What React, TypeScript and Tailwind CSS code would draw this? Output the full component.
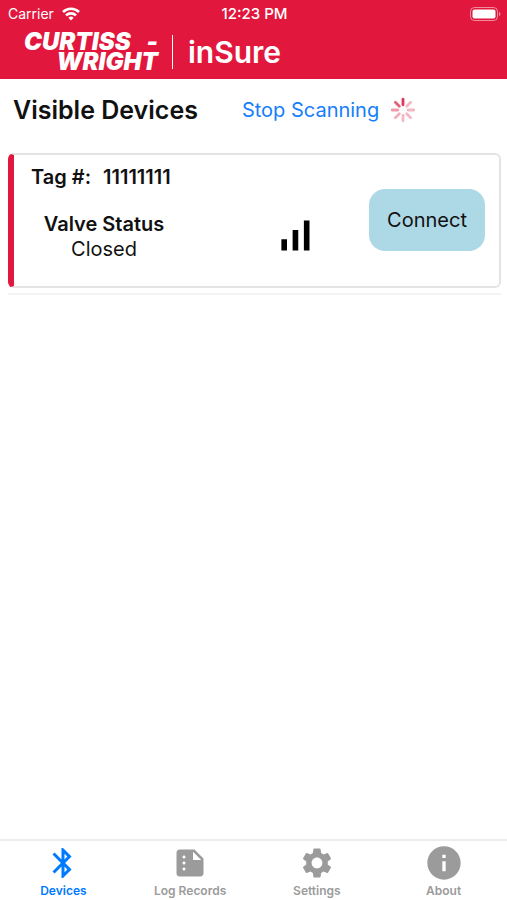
import React, { useState } from 'react';
import type { IconType } from 'react-icons';
import { MdBluetooth, MdInfo, MdSettings, MdSignalCellularAlt, MdSummarize } from 'react-icons/md';

interface Device {
  tag: string;
  valveStatus: string;
}

interface Tab {
  label: string;
  icon: IconType;
  iconClass: string;
}

const devices: Device[] = [{ tag: '11111111', valveStatus: 'Closed' }];

const tabs: Tab[] = [
  { label: 'Devices', icon: MdBluetooth, iconClass: 'size-9' },
  { label: 'Log Records', icon: MdSummarize, iconClass: 'size-9' },
  { label: 'Settings', icon: MdSettings, iconClass: 'size-9' },
  { label: 'About', icon: MdInfo, iconClass: 'size-10' },
];

const WifiIcon: React.FC = () => (
  <svg viewBox="0 0 18 14" className="h-3.5 w-[18px]" fill="none" stroke="currentColor" strokeWidth="2.6" aria-hidden="true">
    <path d="M1 5a11.4 11.4 0 0 1 16 0" />
    <path d="M4 8.4a7.1 7.1 0 0 1 10 0" />
    <path d="M9 13.6 6.4 10.8a3.8 3.8 0 0 1 5.2 0z" fill="currentColor" stroke="none" />
  </svg>
);

const BatteryIcon: React.FC = () => (
  <svg viewBox="0 0 31 14" className="h-3.5 w-[31px]" aria-hidden="true">
    <rect x="0.5" y="0.5" width="27" height="13" rx="4" fill="none" stroke="#fff" strokeOpacity="0.5" />
    <rect x="2.5" y="2.5" width="23" height="9" rx="2" fill="#fff" />
    <path d="M29 4.8c2 .8 2 3.6 0 4.4z" fill="#fff" fillOpacity="0.5" />
  </svg>
);

const spokes = [1, 0.35, 0.35, 0.35, 0.35, 0.4, 0.5, 0.8];

const Spinner: React.FC = () => (
  <svg viewBox="0 0 26 26" className="size-[26px]" role="img" aria-label="Scanning">
    {spokes.map((opacity, i) => (
      <line
        key={i}
        x1="13"
        y1="2.2"
        x2="13"
        y2="7.8"
        stroke="#dc3a5c"
        strokeWidth="2.8"
        strokeLinecap="round"
        opacity={opacity}
        transform={`rotate(${i * 45} 13 13)`}
      />
    ))}
  </svg>
);

const Header: React.FC = () => (
  <header className="bg-[#e2173d] text-white">
    <div className="grid h-7 grid-cols-3 items-center pl-2 pr-1.5 text-sm">
      <div className="flex items-center gap-2">
        <span>Carrier</span>
        <WifiIcon />
      </div>
      <span className="text-center text-[15px] font-medium">12:23 PM</span>
      <div className="flex justify-end">
        <BatteryIcon />
      </div>
    </div>
    <div className="flex h-[51px] items-center pb-1 pl-6">
      <div className="flex w-[134px] flex-col whitespace-nowrap text-2xl/5 font-black italic">
        <span className="flex justify-between">
          <span>CURTISS</span>
          <span>-</span>
        </span>
        <span className="text-right">WRIGHT</span>
      </div>
      <div className="ml-3.5 h-[34px] w-px bg-white" />
      <h1 className="ml-[15px] text-[30px] font-semibold leading-9">inSure</h1>
    </div>
  </header>
);

const DeviceCard: React.FC<{ device: Device }> = ({ device }) => (
  <li className="border-b-2 border-[#f3f3f3] pb-[5px]">
    <div className="flex rounded-md border-2 border-l-[6px] border-[#e4e4e4] border-l-[#e2173d] pb-6 pl-[17px] pr-3.5 pt-2">
      <div className="flex-1">
        <p className="text-xl font-semibold leading-7">
          Tag #:<span className="ml-3">{device.tag}</span>
        </p>
        <div className="mt-[21px] w-[146px] text-center text-xl leading-[25px]">
          <p className="font-semibold">Valve Status</p>
          <p>{device.valveStatus}</p>
        </div>
      </div>
      <MdSignalCellularAlt className="mr-[52px] mt-[50px] size-[45px] text-black" aria-label="Signal strength" />
      <button
        type="button"
        className="mt-[26px] h-[62px] w-[116px] rounded-2xl bg-[#add8e6] text-xl"
      >
        Connect
      </button>
    </div>
  </li>
);

const App: React.FC = () => {
  const [scanning, setScanning] = useState(true);
  const [activeTab, setActiveTab] = useState('Devices');

  return (
    <div className="flex min-h-screen flex-col bg-white font-['Inter',sans-serif] text-[#111]">
      <Header />
      <main className="flex-1 pl-2 pr-1.5">
        <div className="flex items-center pb-[26px] pl-[5px] pt-3.5">
          <h2 className="text-[25px] font-semibold leading-[34px]">Visible Devices</h2>
          <button
            type="button"
            onClick={() => setScanning(!scanning)}
            className="ml-11 mr-[11px] text-xl text-[#157efb]"
          >
            {scanning ? 'Stop Scanning' : 'Start Scanning'}
          </button>
          {scanning && <Spinner />}
        </div>
        <ul>
          {devices.map((device) => (
            <DeviceCard key={device.tag} device={device} />
          ))}
        </ul>
      </main>
      <nav className="grid h-[61px] grid-cols-4 border-t-2 border-[#ececec]">
        {tabs.map(({ label, icon: Icon, iconClass }) => (
          <button
            key={label}
            type="button"
            onClick={() => setActiveTab(label)}
            className={`flex flex-col items-center ${activeTab === label ? 'text-[#007aff]' : 'text-[#9b9b9b]'}`}
          >
            <span className="flex h-11 items-center">
              <Icon className={iconClass} />
            </span>
            <span className="text-xs font-semibold leading-3">{label}</span>
          </button>
        ))}
      </nav>
    </div>
  );
};

export default App;
